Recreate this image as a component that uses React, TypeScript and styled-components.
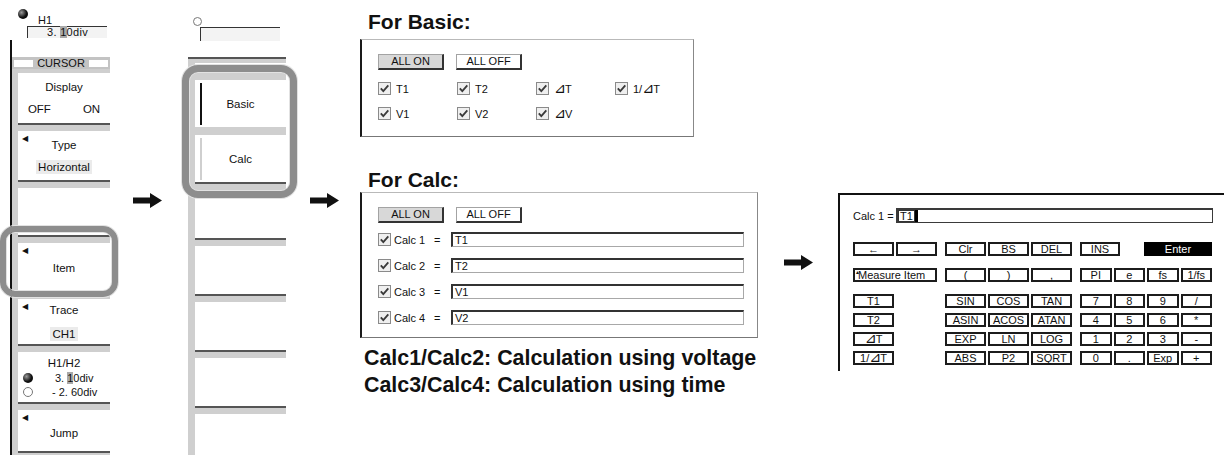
import styled, { createGlobalStyle } from "styled-components";

const GlobalStyle = createGlobalStyle`
  html, body { margin: 0; padding: 0; background: #fff; }
  body {
    font-family: "Liberation Sans", Arial, "DejaVu Sans", sans-serif;
    color: #111;
  }
`;

const Page = styled.div`
  display: flex;
  align-items: flex-start;
  width: 1224px;
  height: 455px;
  overflow: hidden;
  background: #fff;
`;

/* ---------- soft key menus ---------- */

const Menu = styled.div<{ $left: number; $width: number }>`
  position: relative;
  flex: none;
  display: flex;
  flex-direction: column;
  margin-left: ${(p) => p.$left}px;
  width: ${(p) => p.$width}px;
  height: 455px;
`;

const MenuHead = styled.div<{ $pad: number; $rule?: boolean }>`
  flex: none;
  height: 57px;
  box-sizing: border-box;
  padding: ${(p) => p.$pad}px 0 0 0;
  background: ${(p) =>
    p.$rule ? "linear-gradient(#111, #111) 0 40px / 2px 17px no-repeat, #fff" : "#fff"};
`;

const HeadRow = styled.div`
  display: flex;
  align-items: flex-start;
  height: 17px;
  padding-left: 8px;
  gap: 10px;
`;

const Knob = styled.span<{ $hollow?: boolean }>`
  flex: none;
  width: 10px;
  height: 10px;
  border-radius: 50%;
  box-sizing: border-box;
  background: ${(p) =>
    p.$hollow
      ? "#fff"
      : "radial-gradient(circle at 35% 35%, #9a9a9a 0, #111 55%, #000 100%)"};
  border: ${(p) => (p.$hollow ? "1px solid #777" : "none")};
`;

const SmallLabel = styled.span`
  font-size: 11px;
  line-height: 11px;
  margin-top: 6px;
`;

const ValueBox = styled.div<{ $left: number; $width: number; $h: number }>`
  margin-left: ${(p) => p.$left}px;
  width: ${(p) => p.$width}px;
  height: ${(p) => p.$h}px;
  box-sizing: border-box;
  border-top: 1px solid #333;
  border-left: 1px solid #333;
  background: #f3f3f3;
  font-size: 11px;
  line-height: 11px;
  text-align: center;
  letter-spacing: 0.3px;
`;

const Cur = styled.span`
  background: #a9a9a9;
`;

const Dial = styled.span`
  display: block;
  margin-left: 5px;
  width: 9px;
  height: 9px;
  border: 1px solid #777;
  border-radius: 50%;
  box-sizing: border-box;
  margin-bottom: 1px;
`;

const MenuBody = styled.div<{ $rule?: boolean; $pad: number }>`
  flex: 1;
  display: flex;
  flex-direction: column;
  background: #cfcfcf;
  padding-left: ${(p) => p.$pad}px;
  border-left: ${(p) => (p.$rule ? "2px solid #111" : "none")};
  border-top: ${(p) => (p.$rule ? "none" : "2px solid #555")};
`;

const TitleBand = styled.div`
  display: flex;
  align-items: center;
  height: 12px;
  margin: 0 0 4px -6px;
  padding: 0 2px;
  background: #c3c3c3;
  font-size: 11px;
`;

const TitleInset = styled.span`
  flex: 1;
  height: 7px;
  background: #fff;
`;

const TitleText = styled.span`
  padding: 0 4px;
  line-height: 12px;
`;

const MenuKey = styled.div<{ $h: number; $edge?: string; $gap?: number; $mark?: string }>`
  position: relative;
  flex: none;
  height: ${(p) => p.$h}px;
  background: #fff;
  border-bottom: 2px solid ${(p) => p.$edge ?? "#555"};
  margin-bottom: 6px;
  display: flex;
  flex-direction: column;
  align-items: center;
  justify-content: center;
  gap: ${(p) => p.$gap ?? 8}px;
  font-size: 11.5px;
  line-height: 14px;

  &::before {
    content: "";
    display: ${(p) => (p.$mark ? "block" : "none")};
    position: absolute;
    left: 5px;
    top: 3px;
    bottom: 2px;
    width: 2px;
    background: ${(p) => p.$mark};
  }
`;

const Pointer = styled.span`
  position: absolute;
  left: 4px;
  top: 4px;
  font-size: 8px;
  line-height: 8px;
`;

const Shade = styled.span`
  background: #ebebeb;
  padding: 0 2px;
`;

const OnOff = styled.div`
  display: flex;
  gap: 32px;
`;

const ReadRows = styled.div`
  align-self: stretch;
  display: flex;
  flex-direction: column;
  gap: 1px;
  padding-left: 5px;
`;

const ReadRow = styled.div`
  display: flex;
  align-items: center;
  gap: 22px;
  font-size: 11px;
  line-height: 13px;
`;

const Frame = styled.div<{ $x: number; $y: number; $w: number; $h: number; $t: number }>`
  position: absolute;
  left: ${(p) => p.$x}px;
  top: ${(p) => p.$y}px;
  width: ${(p) => p.$w}px;
  height: ${(p) => p.$h}px;
  box-sizing: border-box;
  border: ${(p) => p.$t}px solid #8d8d8d;
  border-radius: ${(p) => p.$t + 9}px;
  box-shadow: 0 0 0 1px #e2e2e2, inset 0 0 0 1px #e2e2e2;
  pointer-events: none;
`;

/* ---------- arrows ---------- */

const ArrowSlot = styled.div<{ $left: number; $top: number }>`
  flex: none;
  margin-left: ${(p) => p.$left}px;
  padding-top: ${(p) => p.$top}px;
  line-height: 0;
`;

const Arrow = () => (
  <svg width="29" height="15" viewBox="0 0 29 15">
    <path d="M0 4.5H17V0L29 7.5L17 15V10.5H0Z" fill="#111" />
  </svg>
);

/* ---------- item dialogs ---------- */

const Column = styled.div`
  flex: none;
  width: 399px;
  margin-left: 21px;
`;

const Heading = styled.div<{ $top: number }>`
  margin-top: ${(p) => p.$top}px;
  padding-left: 8px;
  font-size: 21px;
  line-height: 24px;
  font-weight: bold;
  color: #111;
`;

const Dialog = styled.div<{ $w: number; $h: number; $top?: number }>`
  width: ${(p) => p.$w}px;
  height: ${(p) => p.$h}px;
  margin-top: ${(p) => p.$top ?? 0}px;
  box-sizing: border-box;
  border-left: 2px solid #1a1a1a;
  border-top: 1px solid #b9b9b9;
  border-right: 1px solid #888;
  border-bottom: 1px solid #777;
  padding: 14px 0 0 16px;
`;

const ButtonRow = styled.div`
  display: flex;
  gap: 12px;
`;

const AllButton = styled.div<{ $on?: boolean }>`
  width: 66px;
  height: 16px;
  box-sizing: border-box;
  background: ${(p) => (p.$on ? "#d8d8d8" : "#fff")};
  border: 1px solid #a3a3a3;
  border-right: 2px solid #333;
  border-bottom: 2px solid #333;
  font-size: 11px;
  line-height: 13px;
  text-align: center;
`;

const CheckGrid = styled.div`
  display: grid;
  grid-template-columns: repeat(4, 79px);
  row-gap: 12px;
  margin-top: 12px;
`;

const CheckItem = styled.div`
  display: flex;
  align-items: center;
  gap: 5px;
  height: 13px;
  font-size: 11px;
`;

const Delta = styled.span`
  font-family: "DejaVu Sans", sans-serif;
  font-size: 1.3em;
  line-height: 0;
  letter-spacing: -1px;
`;

const Check = () => (
  <svg width="13" height="13" viewBox="0 0 13 13" style={{ flex: "none" }}>
    <rect x="0.5" y="0.5" width="12" height="12" fill="#efefef" stroke="#8a8a8a" />
    <path d="M2.8 6.3L5.3 9.2L10.3 3.3" fill="none" stroke="#3a3a3a" strokeWidth="1.8" />
  </svg>
);

const CalcRows = styled.div`
  display: flex;
  flex-direction: column;
  gap: 11px;
  margin-top: 9px;
`;

const CalcRow = styled.div`
  display: flex;
  align-items: center;
  height: 15px;
  font-size: 11px;
`;

const CalcName = styled.span`
  width: 40px;
  margin-left: 3px;
`;

const Equals = styled.span`
  width: 17px;
`;

const Field = styled.div<{ $w: number }>`
  width: ${(p) => p.$w}px;
  height: 15px;
  box-sizing: border-box;
  background: #fff;
  border-top: 2px solid #333;
  border-left: 2px solid #333;
  border-right: 1px solid #a8a8a8;
  border-bottom: 1px solid #a8a8a8;
  padding-left: 2px;
  font-size: 11px;
  line-height: 12px;
`;

const Caption = styled.div`
  margin-top: 7px;
  padding-left: 4px;
  font-size: 21.4px;
  line-height: 27px;
  font-weight: bold;
  white-space: nowrap;
`;

/* ---------- expression keypad ---------- */

const Keypad = styled.div`
  flex: 1;
  margin: 193px 0 0 25px;
  height: 178px;
  box-sizing: border-box;
  border-top: 2px solid #111;
  border-left: 2px solid #111;
  padding: 13px 0 0 13px;
`;

const EntryRow = styled.div`
  display: flex;
  align-items: center;
  font-size: 11px;
`;

const EntryLabel = styled.span`
  width: 43px;
`;

const EntryField = styled.div`
  display: flex;
  align-items: center;
  width: 317px;
  height: 15px;
  box-sizing: border-box;
  border: 2px solid #3a3a3a;
  border-right-width: 1px;
  border-bottom-width: 1px;
`;

const Token = styled.span`
  border: 1px solid #333;
  padding: 0 1px;
  line-height: 10px;
  font-size: 11px;
`;

const Caret = styled.span`
  width: 3px;
  height: 12px;
  background: #000;
`;

const KeyRow = styled.div<{ $top: number }>`
  display: flex;
  gap: 8px;
  margin-top: ${(p) => p.$top}px;
`;

const KeyGroup = styled.div<{ $w: number }>`
  display: flex;
  gap: 2px;
  width: ${(p) => p.$w}px;
`;

const Key = styled.div<{ $w?: number; $dark?: boolean; $left?: boolean }>`
  position: relative;
  flex: ${(p) => (p.$w ? "none" : "1")};
  width: ${(p) => (p.$w ? `${p.$w}px` : "auto")};
  height: 14px;
  box-sizing: border-box;
  border: 2px solid ${(p) => (p.$dark ? "#000" : "#1c1c1c")};
  background: ${(p) => (p.$dark ? "#000" : "#fff")};
  color: ${(p) => (p.$dark ? "#fff" : "#111")};
  font-size: 11px;
  line-height: 10px;
  text-align: ${(p) => (p.$left ? "left" : "center")};
  padding-left: ${(p) => (p.$left ? "3px" : "0")};
  white-space: nowrap;
`;

const Spacer = styled.span`
  flex: 1;
`;

const Tick = styled.span`
  position: absolute;
  left: 0;
  top: 0;
  font-size: 5px;
  line-height: 5px;
`;

const withDelta = (label: string) => {
  const i = label.indexOf("⊿");
  if (i < 0) return label;
  return (
    <>
      {label.slice(0, i)}
      <Delta>⊿</Delta>
      {label.slice(i + 1)}
    </>
  );
};

const KEY_ROWS: [string, string[], string[]][] = [
  ["T1", ["SIN", "COS", "TAN"], ["7", "8", "9", "/"]],
  ["T2", ["ASIN", "ACOS", "ATAN"], ["4", "5", "6", "*"]],
  ["⊿T", ["EXP", "LN", "LOG"], ["1", "2", "3", "-"]],
  ["1/⊿T", ["ABS", "P2", "SQRT"], ["0", ".", "Exp", "+"]],
];

export default function App() {
  return (
    <>
      <GlobalStyle />
      <Page>
        <Menu $left={10} $width={100}>
          <MenuHead $pad={9} $rule>
            <HeadRow>
              <Knob />
              <SmallLabel>H1</SmallLabel>
            </HeadRow>
            <ValueBox $left={17} $width={80} $h={12}>
              3. <Cur>1</Cur>0div
            </ValueBox>
          </MenuHead>
          <MenuBody $rule $pad={6}>
            <TitleBand>
              <TitleInset />
              <TitleText>CURSOR</TitleText>
              <TitleInset />
            </TitleBand>
            <MenuKey $h={50}>
              <span>Display</span>
              <OnOff>
                <span>OFF</span>
                <span>ON</span>
              </OnOff>
            </MenuKey>
            <MenuKey $h={49}>
              <Pointer>◀</Pointer>
              <span>Type</span>
              <Shade>Horizontal</Shade>
            </MenuKey>
            <MenuKey $h={47} />
            <MenuKey $h={48}>
              <Pointer>◀</Pointer>
              <span style={{ marginTop: 2 }}>Item</span>
            </MenuKey>
            <MenuKey $h={45} $gap={10}>
              <Pointer>◀</Pointer>
              <span>Trace</span>
              <Shade>CH1</Shade>
            </MenuKey>
            <MenuKey $h={50} $gap={2}>
              <span>H1/H2</span>
              <ReadRows>
                <ReadRow>
                  <Knob />
                  <span>
                    3. <Cur>1</Cur>0div
                  </span>
                </ReadRow>
                <ReadRow>
                  <Knob $hollow />
                  <span style={{ marginLeft: -3 }}>- 2. 60div</span>
                </ReadRow>
              </ReadRows>
            </MenuKey>
            <MenuKey $h={41}>
              <Pointer>◀</Pointer>
              <span style={{ marginTop: 4 }}>Jump</span>
            </MenuKey>
          </MenuBody>
          <Frame $x={-10} $y={226} $w={118} $h={71} $t={6} />
        </Menu>

        <ArrowSlot $left={23} $top={193}>
          <Arrow />
        </ArrowSlot>

        <Menu $left={26} $width={98}>
          <MenuHead $pad={17}>
            <Dial />
            <ValueBox $left={12} $width={80} $h={14} />
          </MenuHead>
          <MenuBody $pad={7}>
            <MenuKey $h={9} $edge="#cfcfcf" style={{ marginTop: 4 }} />
            <MenuKey $h={47} $edge="#cfcfcf" $mark="#111">
              <span>Basic</span>
            </MenuKey>
            <MenuKey $h={47} $mark="#cfcfcf">
              <span>Calc</span>
            </MenuKey>
            <MenuKey $h={48} />
            <MenuKey $h={48} />
            <MenuKey $h={48} />
            <MenuKey $h={48} />
            <MenuKey $h={60} />
          </MenuBody>
          <Frame $x={-6} $y={65} $w={115} $h={133} $t={7} />
        </Menu>

        <ArrowSlot $left={24} $top={193}>
          <Arrow />
        </ArrowSlot>

        <Column>
          <Heading $top={10}>For Basic:</Heading>
          <Dialog $w={334} $h={98} $top={5}>
            <ButtonRow>
              <AllButton $on>ALL ON</AllButton>
              <AllButton>ALL OFF</AllButton>
            </ButtonRow>
            <CheckGrid>
              {["T1", "T2", "⊿T", "1/⊿T", "V1", "V2", "⊿V"].map((t) => (
                <CheckItem key={t}>
                  <Check />
                  <span>{withDelta(t)}</span>
                </CheckItem>
              ))}
            </CheckGrid>
          </Dialog>

          <Heading $top={31}>For Calc:</Heading>
          <Dialog $w={398} $h={146}>
            <ButtonRow>
              <AllButton $on>ALL ON</AllButton>
              <AllButton>ALL OFF</AllButton>
            </ButtonRow>
            <CalcRows>
              {["T1", "T2", "V1", "V2"].map((v, i) => (
                <CalcRow key={v}>
                  <Check />
                  <CalcName>Calc {i + 1}</CalcName>
                  <Equals>=</Equals>
                  <Field $w={293}>{v}</Field>
                </CalcRow>
              ))}
            </CalcRows>
          </Dialog>
          <Caption>
            Calc1/Calc2: Calculation using voltage
            <br />
            Calc3/Calc4: Calculation using time
          </Caption>
        </Column>

        <ArrowSlot $left={25} $top={255}>
          <Arrow />
        </ArrowSlot>

        <Keypad>
          <EntryRow>
            <EntryLabel>Calc 1 =</EntryLabel>
            <EntryField>
              <Token>T1</Token>
              <Caret />
            </EntryField>
          </EntryRow>

          <KeyRow $top={19}>
            <KeyGroup $w={84}>
              <Key>←</Key>
              <Key>→</Key>
            </KeyGroup>
            <KeyGroup $w={127}>
              <Key>Clr</Key>
              <Key>BS</Key>
              <Key>DEL</Key>
            </KeyGroup>
            <KeyGroup $w={132}>
              <Key $w={40}>INS</Key>
              <Spacer />
              <Key $w={68} $dark>
                Enter
              </Key>
            </KeyGroup>
          </KeyRow>

          <KeyRow $top={12}>
            <KeyGroup $w={84}>
              <Key $left>
                <Tick>▲</Tick>
                Measure Item
              </Key>
            </KeyGroup>
            <KeyGroup $w={127}>
              <Key>(</Key>
              <Key>)</Key>
              <Key>,</Key>
            </KeyGroup>
            <KeyGroup $w={132}>
              <Key>PI</Key>
              <Key>e</Key>
              <Key>fs</Key>
              <Key>1/fs</Key>
            </KeyGroup>
          </KeyRow>

          {KEY_ROWS.map(([item, funcs, nums], i) => (
            <KeyRow key={item} $top={i === 0 ? 12 : 5}>
              <KeyGroup $w={84}>
                <Key $w={41}>{withDelta(item)}</Key>
              </KeyGroup>
              <KeyGroup $w={127}>
                {funcs.map((f) => (
                  <Key key={f}>{f}</Key>
                ))}
              </KeyGroup>
              <KeyGroup $w={132}>
                {nums.map((n) => (
                  <Key key={n}>{n}</Key>
                ))}
              </KeyGroup>
            </KeyRow>
          ))}
        </Keypad>
      </Page>
    </>
  );
}
